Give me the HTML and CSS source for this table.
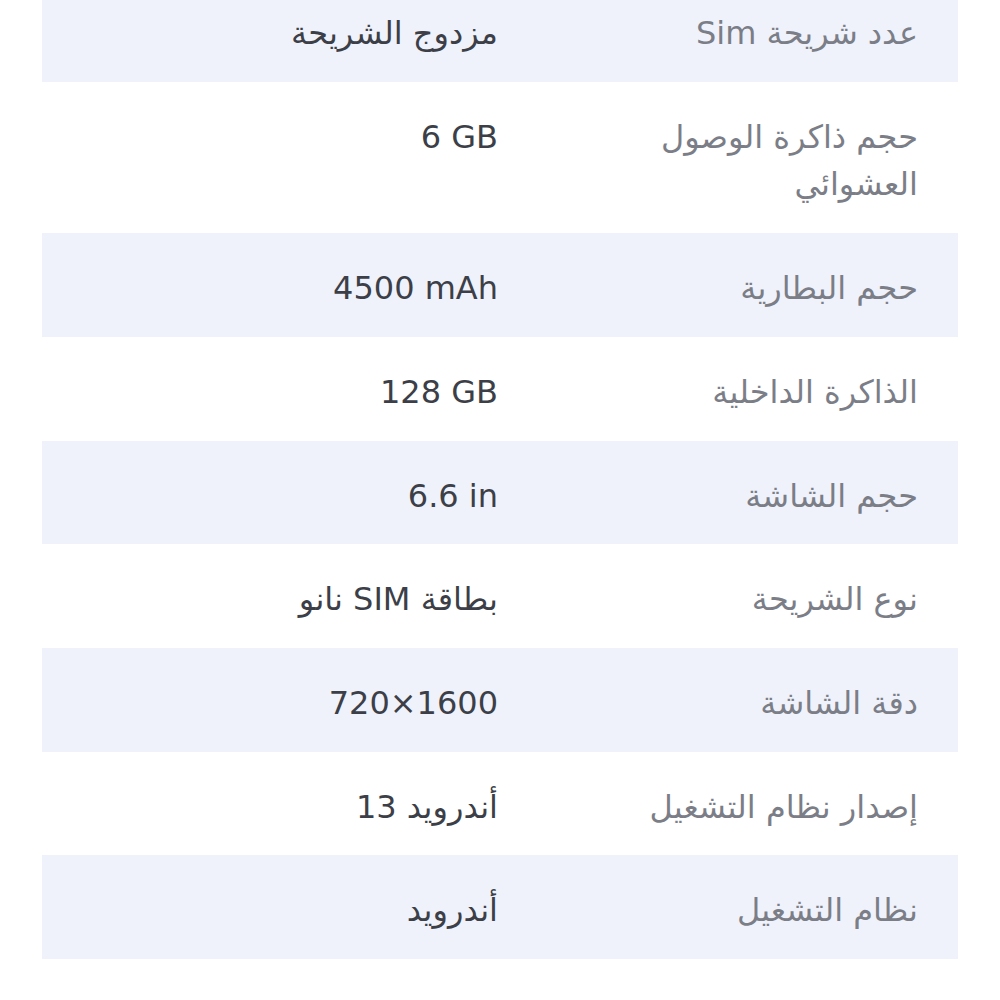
FILE: index.html
```html
<!DOCTYPE html>
<html lang="ar" dir="rtl">
<head>
<meta charset="utf-8">
<link rel="stylesheet" href="styles.css">
</head>
<body>
<div class="specs">
  <div class="row band"><div class="label">عدد شريحة Sim</div><div class="value">مزدوج الشريحة</div></div>
  <div class="row"><div class="label">حجم ذاكرة الوصول العشوائي</div><div class="value"><bdi dir="ltr">6 GB</bdi></div></div>
  <div class="row band"><div class="label">حجم البطارية</div><div class="value"><bdi dir="ltr">4500 mAh</bdi></div></div>
  <div class="row"><div class="label">الذاكرة الداخلية</div><div class="value"><bdi dir="ltr">128 GB</bdi></div></div>
  <div class="row band"><div class="label">حجم الشاشة</div><div class="value"><bdi dir="ltr">6.6 in</bdi></div></div>
  <div class="row"><div class="label">نوع الشريحة</div><div class="value">بطاقة SIM نانو</div></div>
  <div class="row band"><div class="label">دقة الشاشة</div><div class="value"><bdi dir="ltr">720×1600</bdi></div></div>
  <div class="row"><div class="label">إصدار نظام التشغيل</div><div class="value">أندرويد 13</div></div>
  <div class="row band"><div class="label">نظام التشغيل</div><div class="value">أندرويد</div></div>
  <div class="row"><div class="label">الكاميرا الخلفية</div><div class="value">كاميرا ثلاثية بدقة 50 ميجابكسل</div></div>
</div>
</body>
</html>
```
FILE: styles.css
```css
html, body {
  margin: 0;
  padding: 0;
  background: #ffffff;
}
body {
  font-family: "DejaVu Sans", "Noto Sans", sans-serif;
  overflow: hidden;
}
.specs {
  margin: -22px 42px 0 42px;
  direction: rtl;
}
.row {
  display: grid;
  grid-template-columns: 458px 458px;
  padding: 32px 0 24px;
  font-size: 32px;
  line-height: 47.7px;
}
.band {
  background: #eff2fb;
}
.label {
  padding: 0 40px 0 60px;
  color: #7b7e87;
}
.value {
  padding: 0 2px 0 20px;
  color: #3c3f47;
}
```
